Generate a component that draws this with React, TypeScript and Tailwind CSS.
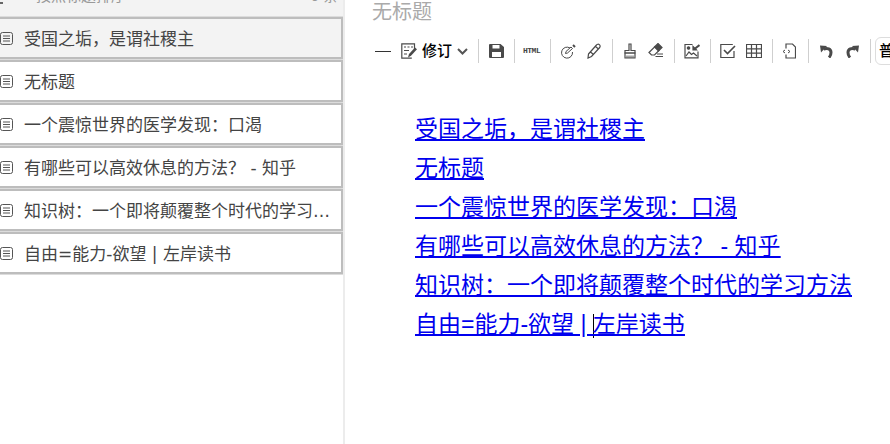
import React from 'react';

const articles = [
  '受国之垢，是谓社稷主',
  '无标题',
  '一个震惊世界的医学发现：口渴',
  '有哪些可以高效休息的方法？ - 知乎',
  '知识树：一个即将颠覆整个时代的学习方法',
  '自由=能力-欲望 | 左岸读书',
];

const font = "font-['Liberation_Sans','Noto_Sans_CJK_SC',sans-serif]";

// toolbar separator, margin comes from the caller
const Sep = ({ className = '' }: { className?: string }) => (
  <div className={`w-px h-6 bg-[#cfcfcf] shrink-0 ${className}`} />
);

// toolbar glyph wrapper, all the icons are drawn on a 16 grid
const Ico = ({ w = 16, className = '', children }: { w?: number; className?: string; children: React.ReactNode }) => (
  <svg width={w} height={16} viewBox={`0 0 ${w} 16`} fill="none" stroke="#4a4a4a" strokeWidth="1.2" className={`shrink-0 ${className}`}>
    {children}
  </svg>
);

const DocIcon = () => (
  <svg width="13" height="13" viewBox="0 0 13 13" fill="none" stroke="#555" strokeWidth="1" className="shrink-0">
    <rect x="0.5" y="0.5" width="12" height="12" rx="2" />
    <path d="M3 4h7M3 6.5h7M3 9h7" />
  </svg>
);

const UndoIcon = ({ className = '' }: { className?: string }) => (
  <svg width="13" height="13" viewBox="0 0 13 13" className={`shrink-0 ${className}`}>
    <path d="M0 0.500l7 0.500L1 7.500z" fill="#4a4a4a" />
    <path d="M3.500 4C7.500 2.500 11 4 11 7.500C11 9.500 10.500 11 9 12.500" fill="none" stroke="#4a4a4a" strokeWidth="3" />
  </svg>
);

function Sidebar() {
  return (
    <aside className="w-[345px] shrink-0 border-r-2 border-[#ececec] bg-white overflow-hidden">
      <div className="relative h-[16px] bg-[#f3f3f3] border-b border-[#dcdcdc] box-content overflow-hidden flex justify-between pl-[36px] pr-[5px] text-[15px] text-[#999] leading-[18px]">
        <div className="absolute left-0 top-[2px] w-[3px] h-[2px] bg-[#666]" />
        <span className="-mt-[13px]">按照标题排序</span>
        <span className="-mt-[13px]">6 条</span>
      </div>
      <div className="flex flex-col gap-px -ml-[4px]">
        {articles.map((t, i) => (
          <div
            key={t}
            className={`h-[42px] border-2 border-[#bdbdbd] shadow-[0_1px_0_#dcdcdc] flex items-center gap-[11px] pl-[2px] pr-[9px] ${i === 0 ? 'bg-[#f3f3f3]' : 'bg-white'}`}
          >
            <DocIcon />
            <span className="truncate pt-[4px] text-[17px] text-[#444] font-['DejaVu_Sans','Noto_Sans_CJK_SC',sans-serif]">{t}</span>
          </div>
        ))}
      </div>
    </aside>
  );
}

function Toolbar() {
  return (
    <div className="h-[36px] flex items-center pl-[30px] overflow-hidden">
      <div className="w-[16px] h-px bg-[#333] shrink-0" />
      <Ico className="ml-[10px]">
        <path d="M13.500 6.500V.8H.8v14.400h10" />
        <path d="M3 4h2M6.500 4h2M10 4h2M3 7.500h5M3 11h3" />
        <path d="M7 14.500l1-3.500 6-6.500 2 1.800-6 6.500z" fill="#4a4a4a" stroke="none" />
      </Ico>
      <span className="ml-[5px] text-[15px] font-medium text-black whitespace-nowrap">修订</span>
      <svg width="11" height="7" viewBox="0 0 11 7" fill="none" stroke="#555" strokeWidth="2" className="ml-[5px] shrink-0">
        <path d="M1 1l4.500 4.500L10 1" />
      </svg>
      <Sep className="ml-[10px]" />
      <svg width="15" height="14" viewBox="0 0 15 14" className="ml-[10px] shrink-0">
        <path fillRule="evenodd" fill="#4a4a4a" d="M0 1a1 1 0 0 1 1-1h10.500L15 3v10a1 1 0 0 1-1 1H1a1 1 0 0 1-1-1zM3.500 1v3.500h7V1zM3 8v5h9V8z" />
      </svg>
      <Sep className="ml-[10px]" />
      <span className="ml-[8px] w-[17px] text-[8px] leading-none font-bold text-[#444] font-['Liberation_Mono',monospace] tracking-[-0.5px] shrink-0">HTML</span>
      <Sep className="ml-[10px]" />
      <Ico className="ml-[9px]">
        <path d="M10 5A5.500 5.500 0 1 0 12.500 9" strokeWidth="1" />
        <path d="M5.500 10.500l.5-2L11 4l1.500 1.500-5 4.500z" fill="#fff" strokeWidth="1" />
        <path d="M13 2l2 2" strokeWidth="2" />
      </Ico>
      <Ico w={14} className="ml-[11px]">
        <path d="M1.500 11L9.500 2a1.800 1.800 0 0 1 3.200 2.500L4.500 13.500 1 15zM8.500 3.500l3 2.500M3.500 9l3 2.500" />
      </Ico>
      <Sep className="ml-[11px]" />
      <Ico w={12} className="ml-[11px]">
        <path d="M5 1h2v6.500h4V10H1V7.500h4z" />
        <path d="M1 10h10v5H1z" />
        <path d="M3 12.500V15M5 12.500V15M7 12.500V15M9 12.500V15" strokeWidth="1" />
      </Ico>
      <Ico className="ml-[12px]">
        <path d="M1 9.500L7 3.500l4 4-4.500 4.500H3.500z" />
        <path d="M6.500 4L10 .5l4 4L10.500 8z" fill="#4a4a4a" />
        <path d="M9 11h6M7.500 13.500h7.500" strokeWidth="1" />
      </Ico>
      <Sep className="ml-[10px]" />
      <Ico className="ml-[9px]">
        <path d="M14 8.500V14.800H1V1.500h7.500" />
        <path d="M2 13l3-4 2.500 2.500 2-1.500 3.500 3" />
        <circle cx="4.500" cy="5" r="1.200" fill="#4a4a4a" />
        <path d="M15.500 2l-5 4" strokeWidth="2" />
        <path d="M9 3.500v3.500h3.500z" fill="#4a4a4a" />
      </Ico>
      <Sep className="ml-[10px]" />
      <Ico className="ml-[9px]">
        <path d="M14 8v6.500H.8V1.500h12" />
        <path d="M4 7l3.500 3.500L15 3" strokeWidth="1.600" />
      </Ico>
      <Ico className="ml-[10px]">
        <path d="M.5 1.500h15v13H.5zM.5 5.800h15M.5 10.200h15M5.500 1.500v13M10.500 1.500v13" />
      </Ico>
      <Sep className="ml-[10px]" />
      <Ico w={14} className="ml-[9px]">
        <path d="M4 5.500V1h6.500l3 3v11H4v-3.500" />
        <path d="M3 7L1 8.500l2 1.500M6 7l2 1.500L6 10" strokeWidth="1" />
      </Ico>
      <Sep className="ml-[12px]" />
      <UndoIcon className="ml-[11px]" />
      <UndoIcon className="ml-[13px] -scale-x-100" />
      <Sep className="ml-[11px]" />
      <div className="ml-[4px] h-[28px] w-[40px] shrink-0 border border-[#ddd] rounded-md pl-[3px] text-[15px] leading-[26px] font-medium text-black">普通</div>
    </div>
  );
}

export default function App() {
  return (
    <div className={`w-[890px] h-[444px] flex overflow-hidden bg-white ${font}`}>
      <Sidebar />
      <main className="flex-1 min-w-0">
        <h1 className="pl-[27px] text-[20px] leading-[24px] font-normal text-[#aaa]">无标题</h1>
        <div className="mt-[9px]"><Toolbar /></div>
        <div className="mt-[41px] pl-[70px] flex flex-col text-[23px] leading-[39px] text-[#0000ee] underline whitespace-nowrap">
          {articles.slice(0, 5).map((t) => (
            <a key={t} href="#">{t}</a>
          ))}
          <a href="#" className="whitespace-pre">
            自由=能力-欲望 | <span className="inline-block w-0 h-[24px] -mr-px border-l border-black align-middle" />左岸读书
          </a>
        </div>
      </main>
    </div>
  );
}
